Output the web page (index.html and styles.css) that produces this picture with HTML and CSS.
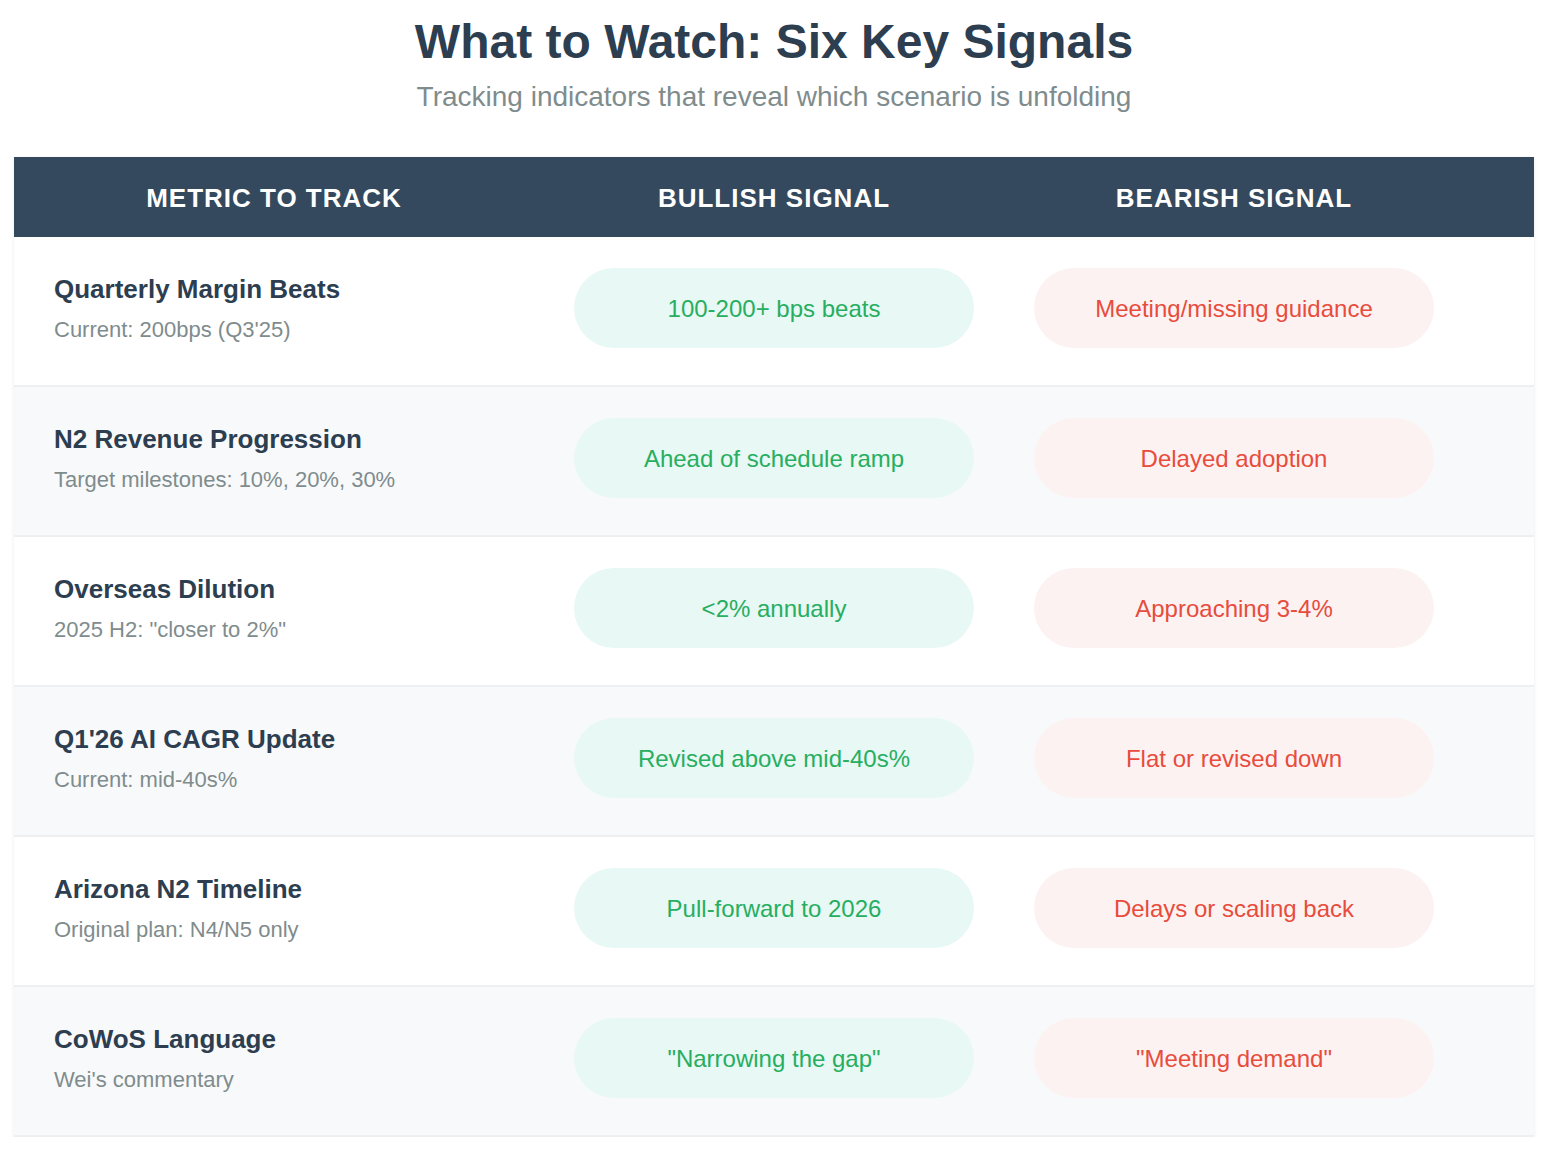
FILE: index.html
```html
<!DOCTYPE html>
<html lang="en">
<head>
<meta charset="utf-8">
<title>What to Watch: Six Key Signals</title>
<link rel="stylesheet" href="styles.css">
</head>
<body>
<main class="page">
  <header class="intro">
    <h1 class="title">What to Watch: Six Key Signals</h1>
    <p class="subtitle">Tracking indicators that reveal which scenario is unfolding</p>
  </header>
  <section class="table">
    <div class="row head">
      <div class="th">Metric to Track</div>
      <div class="th">Bullish Signal</div>
      <div class="th">Bearish Signal</div>
    </div>
    <div class="row">
      <div class="metric"><div class="m-name">Quarterly Margin Beats</div><div class="m-note">Current: 200bps (Q3'25)</div></div>
      <div class="cell"><span class="pill bull">100-200+ bps beats</span></div>
      <div class="cell"><span class="pill bear">Meeting/missing guidance</span></div>
    </div>
    <div class="row alt">
      <div class="metric"><div class="m-name">N2 Revenue Progression</div><div class="m-note">Target milestones: 10%, 20%, 30%</div></div>
      <div class="cell"><span class="pill bull">Ahead of schedule ramp</span></div>
      <div class="cell"><span class="pill bear">Delayed adoption</span></div>
    </div>
    <div class="row">
      <div class="metric"><div class="m-name">Overseas Dilution</div><div class="m-note">2025 H2: "closer to 2%"</div></div>
      <div class="cell"><span class="pill bull">&lt;2% annually</span></div>
      <div class="cell"><span class="pill bear">Approaching 3-4%</span></div>
    </div>
    <div class="row alt">
      <div class="metric"><div class="m-name">Q1'26 AI CAGR Update</div><div class="m-note">Current: mid-40s%</div></div>
      <div class="cell"><span class="pill bull">Revised above mid-40s%</span></div>
      <div class="cell"><span class="pill bear">Flat or revised down</span></div>
    </div>
    <div class="row">
      <div class="metric"><div class="m-name">Arizona N2 Timeline</div><div class="m-note">Original plan: N4/N5 only</div></div>
      <div class="cell"><span class="pill bull">Pull-forward to 2026</span></div>
      <div class="cell"><span class="pill bear">Delays or scaling back</span></div>
    </div>
    <div class="row alt">
      <div class="metric"><div class="m-name">CoWoS Language</div><div class="m-note">Wei's commentary</div></div>
      <div class="cell"><span class="pill bull">"Narrowing the gap"</span></div>
      <div class="cell"><span class="pill bear">"Meeting demand"</span></div>
    </div>
  </section>
</main>
</body>
</html>
```

FILE: styles.css
```css
html, body {
  margin: 0;
  padding: 0;
  background: #ffffff;
}
body {
  font-family: "Liberation Sans", Arial, sans-serif;
  color: #2c3e50;
}
.page {
  padding: 14px 26px 0 14px;
}
.intro {
  text-align: center;
  height: 143px;
}
.title {
  margin: 0;
  padding-top: 0;
  font-size: 48px;
  line-height: 56px;
  font-weight: 700;
  color: #2c3e50;
}
.subtitle {
  margin: 11px 0 0;
  font-size: 28px;
  line-height: 32px;
  color: #7f8c8d;
}
.table {
  width: 1520px;
  box-shadow: 0 1px 4px rgba(0, 0, 0, 0.08);
}
.row {
  display: grid;
  grid-template-columns: 520px 480px 440px 80px;
  align-items: center;
  height: 150px;
  box-sizing: border-box;
  border-bottom: 2px solid #ecf0f1;
  background: #ffffff;
}
.row.alt {
  background: #f8f9fa;
}
.row.head {
  height: 80px;
  background: #34495e;
  border-bottom: none;
}
.th {
  padding-top: 3px;
  text-align: center;
  color: #ffffff;
  font-weight: 700;
  font-size: 26px;
  text-transform: uppercase;
  letter-spacing: 1px;
}
.metric {
  padding-left: 40px;
  padding-bottom: 8px;
}
.m-name {
  font-size: 26px;
  line-height: 32px;
  font-weight: 700;
  color: #2c3e50;
}
.m-note {
  margin-top: 13px;
  font-size: 22px;
  line-height: 24px;
  color: #7f8c8d;
}
.cell {
  display: flex;
  justify-content: center;
  padding-bottom: 7px;
}
.pill {
  display: flex;
  align-items: center;
  justify-content: center;
  width: 400px;
  height: 80px;
  padding-top: 3px;
  box-sizing: border-box;
  border-radius: 40px;
  font-size: 24px;
}
.pill.bull {
  background: #e8f8f5;
  color: #27ae60;
}
.pill.bear {
  background: #fdf2f2;
  color: #e74c3c;
}
```
